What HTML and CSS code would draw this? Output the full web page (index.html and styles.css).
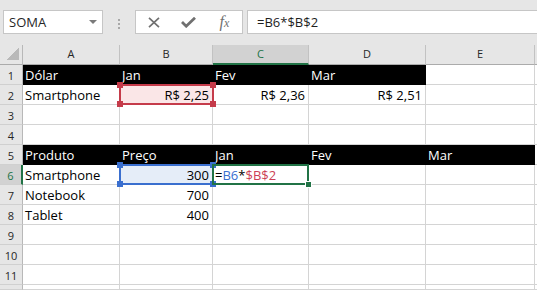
FILE: index.html
```html
<!DOCTYPE html>
<html>
<head>
<meta charset="utf-8">
<link rel="stylesheet" href="styles.css">
</head>
<body>
<div class="toolbar">
  <div class="namebox"><span class="name">SOMA</span><span class="caret"></span></div>
  <div class="grip"><i></i><i></i><i></i></div>
  <div class="fbtns">
    <span class="fb"><svg width="12" height="11" viewBox="0 0 12 11"><path d="M1 0.8 L11 10.2 M11 0.8 L1 10.2" stroke="#707070" stroke-width="1.7" fill="none"/></svg></span>
    <span class="fb"><svg width="15" height="11" viewBox="0 0 15 11"><path d="M1 5 L5.2 9.2 L14 0.8" stroke="#707070" stroke-width="2.8" fill="none"/></svg></span>
    <span class="fb fx"><span class="f">f</span><span class="x">x</span></span>
  </div>
  <div class="finput">=B6*$B$2</div>
</div>
<div class="sheet">
  <div class="ch corner"></div><div class="ch">A</div><div class="ch">B</div><div class="ch sel">C</div><div class="ch">D</div><div class="ch">E</div><div class="ch"></div>

  <div class="rh">1</div><div class="c blk">Dólar</div><div class="c blk">Jan</div><div class="c blk">Fev</div><div class="c blk">Mar</div><div class="c"></div><div class="c"></div>

  <div class="rh">2</div><div class="c">Smartphone</div><div class="c r pink selc">R$ 2,25<span class="box red"><i class="h tl"></i><i class="h tr"></i><i class="h bl"></i><i class="h br"></i></span></div><div class="c r">R$ 2,36</div><div class="c r">R$ 2,51</div><div class="c"></div><div class="c"></div>

  <div class="rh">3</div><div class="c"></div><div class="c"></div><div class="c"></div><div class="c"></div><div class="c"></div><div class="c"></div>

  <div class="rh">4</div><div class="c"></div><div class="c"></div><div class="c"></div><div class="c"></div><div class="c"></div><div class="c"></div>

  <div class="rh">5</div><div class="c blk">Produto</div><div class="c blk">Preço</div><div class="c blk">Jan</div><div class="c blk">Fev</div><div class="c blk">Mar</div><div class="c"></div>

  <div class="rh sel">6</div><div class="c">Smartphone</div><div class="c r lblue selc">300<span class="box blue"><i class="h tl"></i><i class="h tr"></i><i class="h bl"></i><i class="h br"></i></span></div><div class="c selc">=<span class="ref-b">B6</span>*<span class="ref-r">$B$2</span><span class="box green"><i class="fill"></i></span></div><div class="c"></div><div class="c"></div><div class="c"></div>

  <div class="rh">7</div><div class="c">Notebook</div><div class="c r">700</div><div class="c"></div><div class="c"></div><div class="c"></div><div class="c"></div>

  <div class="rh">8</div><div class="c">Tablet</div><div class="c r">400</div><div class="c"></div><div class="c"></div><div class="c"></div><div class="c"></div>

  <div class="rh">9</div><div class="c"></div><div class="c"></div><div class="c"></div><div class="c"></div><div class="c"></div><div class="c"></div>

  <div class="rh">10</div><div class="c"></div><div class="c"></div><div class="c"></div><div class="c"></div><div class="c"></div><div class="c"></div>

  <div class="rh">11</div><div class="c"></div><div class="c"></div><div class="c"></div><div class="c"></div><div class="c"></div><div class="c"></div>

  <div class="rh"></div><div class="c"></div><div class="c"></div><div class="c"></div><div class="c"></div><div class="c"></div><div class="c"></div>
</div>
</body>
</html>
```

FILE: styles.css
```css
* { box-sizing: border-box; margin: 0; padding: 0; }
html, body { width: 537px; height: 290px; overflow: hidden; background: #fff; }
body { font-family: "Open Sans", "Noto Sans", sans-serif; color: #000; }

.toolbar {
  display: flex;
  align-items: flex-start;
  height: 45px;
  padding: 10px 0 0 3px;
  background: #e6e6e6;
}
.namebox {
  width: 100px;
  height: 24px;
  background: #fff;
  border: 1px solid #c6c6c6;
  display: flex;
  align-items: center;
  justify-content: space-between;
  padding: 0 5px;
  font-size: 13px;
  color: #262626;
}
.caret {
  width: 0;
  height: 0;
  border-left: 4px solid transparent;
  border-right: 4px solid transparent;
  border-top: 4px solid #7a7a7a;
}
.grip {
  display: flex;
  flex-direction: column;
  gap: 2px;
  margin: 9px 0 0 15px;
  width: 2px;
}
.grip i { display: block; width: 2px; height: 2px; background: #a8a8a8; }
.fbtns {
  display: flex;
  width: 108px;
  height: 24px;
  margin-left: 15px;
  background: #fff;
  border: 1px solid #c6c6c6;
}
.fb { flex: 1; display: flex; align-items: center; justify-content: center; }
.fx { font-family: "Liberation Serif", serif; font-style: italic; color: #707070; align-items: baseline; padding-top: 1px; }
.fx .f { font-size: 16px; line-height: 20px; }
.fx .x { font-size: 12px; line-height: 20px; }
.finput {
  flex: 1;
  height: 24px;
  margin-left: 4px;
  background: #fff;
  border: 1px solid #c6c6c6;
  border-right: none;
  padding-left: 9px;
  font-size: 13px;
  line-height: 22px;
  color: #1e1e1e;
}

.sheet {
  display: grid;
  grid-template-columns: 23px 97px 93px 96px 117px 109px 1fr;
  grid-template-rows: repeat(12, 20px) 5px;
  height: 245px;
  overflow: hidden;
}
.ch {
  background: #e6e6e6;
  border-right: 1px solid #c2c2c2;
  border-bottom: 1px solid #ababab;
  text-align: center;
  font-size: 11px;
  line-height: 18px;
  color: #262626;
}
.ch.sel {
  background: #d2d2d2;
  color: #217346;
  border-bottom: 2px solid #217346;
}
.corner {
  border-right-color: #b8b8b8;
  background: #e6e6e6 linear-gradient(to bottom right, transparent 50%, #b9b9b9 50%) no-repeat;
  background-size: 12px 12px;
  background-position: right 3px bottom 4px;
}
.rh {
  background: #e6e6e6;
  border-right: 1px solid #b8b8b8;
  border-bottom: 1px solid #d0d0d0;
  text-align: center;
  font-size: 11px;
  line-height: 18px;
  padding-top: 2px;
  color: #262626;
}
.rh.sel {
  background: #d2d2d2;
  color: #217346;
  border-right: 2px solid #217346;
}
.c {
  border-right: 1px solid #d4d4d4;
  border-bottom: 1px solid #d4d4d4;
  font-size: 13px;
  line-height: 18px;
  padding: 1px 3px 0 2px;
  white-space: nowrap;
}
.blk { background: #000; border-color: #000; color: #fff; }
.r { text-align: right; }
.pink { background: #fae6e7; }
.lblue { background: #e5edf8; }
.selc { position: relative; }
.ref-b { color: #3a6fcf; }
.ref-r { color: #cc3f55; }

.box {
  position: absolute;
  top: -1px;
  left: -1px;
  right: -2px;
  bottom: -1px;
  border: 2px solid;
}
.box.red { border-color: #c53b4a; }
.box.blue { border-color: #3a6fcf; }
.box.green { border-color: #217346; right: -1px; }
.h { position: absolute; width: 6px; height: 6px; }
.red .h { background: #c53b4a; }
.blue .h { background: #3a6fcf; }
.tl { left: -4px; top: -4px; }
.tr { right: -4px; top: -4px; }
.bl { left: -4px; bottom: -4px; }
.br { right: -4px; bottom: -4px; }
.fill {
  position: absolute;
  right: -5px;
  bottom: -5px;
  width: 7px;
  height: 7px;
  background: #217346;
  border: 1px solid #fff;
}
```
